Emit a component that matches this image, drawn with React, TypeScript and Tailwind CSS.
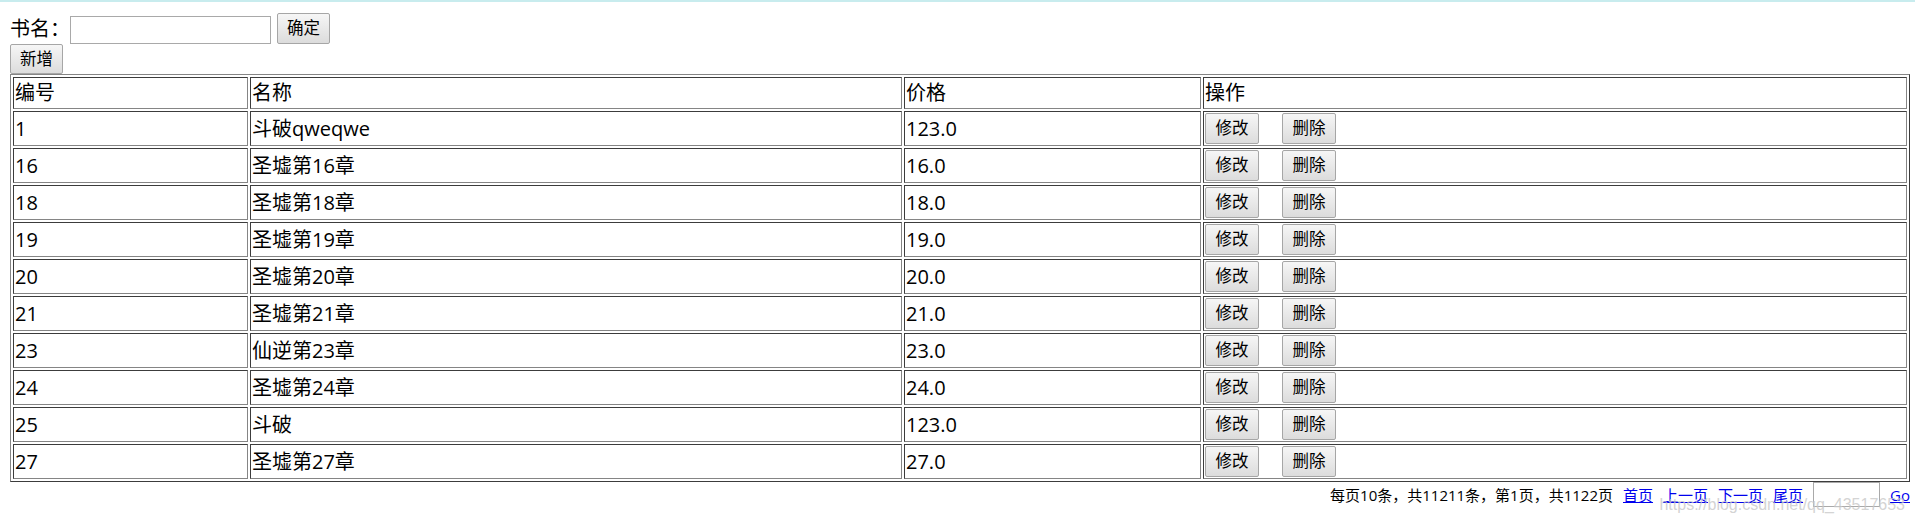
import React from 'react';

interface Book {
    id: number;
    name: string;
    price: string;
}

const books: Book[] = [
    { id: 1, name: '斗破qweqwe', price: '123.0' },
    { id: 16, name: '圣墟第16章', price: '16.0' },
    { id: 18, name: '圣墟第18章', price: '18.0' },
    { id: 19, name: '圣墟第19章', price: '19.0' },
    { id: 20, name: '圣墟第20章', price: '20.0' },
    { id: 21, name: '圣墟第21章', price: '21.0' },
    { id: 23, name: '仙逆第23章', price: '23.0' },
    { id: 24, name: '圣墟第24章', price: '24.0' },
    { id: 25, name: '斗破', price: '123.0' },
    { id: 27, name: '圣墟第27章', price: '27.0' },
];

const font = { fontFamily: '"Open Sans", "Noto Sans CJK SC", sans-serif' };

// old-style windows button
const btn =
    'border border-[#a6a6a6] rounded-[2px] bg-linear-to-b from-[#f6f6f6] to-[#dcdcdc] text-[16.5px] leading-none text-black flex items-center justify-center';

// border="1" cells: inset look
const cell =
    'border border-t-[#3c3c3c] border-l-[#3c3c3c] border-b-[#858585] border-r-[#858585] p-[1px] align-middle text-left font-normal';

export default function App() {
    return (
        <div className="relative h-[524px] overflow-hidden bg-white text-black" style={font}>
            <div className="h-[2px] bg-[#c8ecee]" />
            <div className="pl-[10px] pr-[5px]">
                {/* search */}
                <div className="mt-[11px] flex h-[31px] items-end">
                    <span className="w-[60px] self-center text-[20px] leading-[26px]">书名：</span>
                    <input className="h-[28px] w-[201px] border border-[#a9a9a9] bg-white px-1 outline-none" />
                    <button className={`${btn} ml-[6px] h-[31px] w-[53px]`}>确定</button>
                </div>
                <button className={`${btn} h-[30px] w-[53px]`}>新增</button>

                {/* book list */}
                <table className="w-full table-fixed border-separate border-spacing-[2px] border border-t-[#858585] border-l-[#858585] border-b-[#3c3c3c] border-r-[#3c3c3c] text-[20px] leading-[26px]">
                    <thead>
                        <tr>
                            <td className={`${cell} h-[32px] w-[235px]`}>编号</td>
                            <td className={`${cell} h-[32px] w-[652px]`}>名称</td>
                            <td className={`${cell} h-[32px] w-[297px]`}>价格</td>
                            <td className={`${cell} h-[32px]`}>操作</td>
                        </tr>
                    </thead>
                    <tbody>
                        {books.map(b => (
                            <tr key={b.id}>
                                <td className={`${cell} h-[35px]`}>{b.id}</td>
                                <td className={`${cell} h-[35px]`}>{b.name}</td>
                                <td className={`${cell} h-[35px]`}>{b.price}</td>
                                <td className={`${cell} h-[35px]`}>
                                    <div className="flex items-center">
                                        <button className={`${btn} h-[31px] w-[54px]`}>修改</button>
                                        <button className={`${btn} ml-[23px] h-[31px] w-[54px]`}>删除</button>
                                    </div>
                                </td>
                            </tr>
                        ))}
                    </tbody>
                </table>

                {/* pager */}
                <div className="flex h-[25px] items-center justify-end gap-[10px] text-[15px] leading-[20px]">
                    <span>每页10条，共11211条，第1页，共1122页</span>
                    <a href="#" className="text-[#0000ee] underline">首页</a>
                    <a href="#" className="text-[#0000ee] underline">上一页</a>
                    <a href="#" className="text-[#0000ee] underline">下一页</a>
                    <a href="#" className="text-[#0000ee] underline">尾页</a>
                    <input className="h-[25px] w-[67px] border border-[#a9a9a9] bg-white outline-none" />
                    <a href="#" className="text-[#0000ee] underline">Go</a>
                </div>
            </div>

            <div
                className="pointer-events-none absolute right-[10px] top-[496px] text-[16px] leading-[18px] text-[#c8c8c8]/80"
                style={{ fontFamily: '"Liberation Sans", Arial, sans-serif' }}
            >
                https://blog.csdn.net/qq_43517653
            </div>
        </div>
    );
}
